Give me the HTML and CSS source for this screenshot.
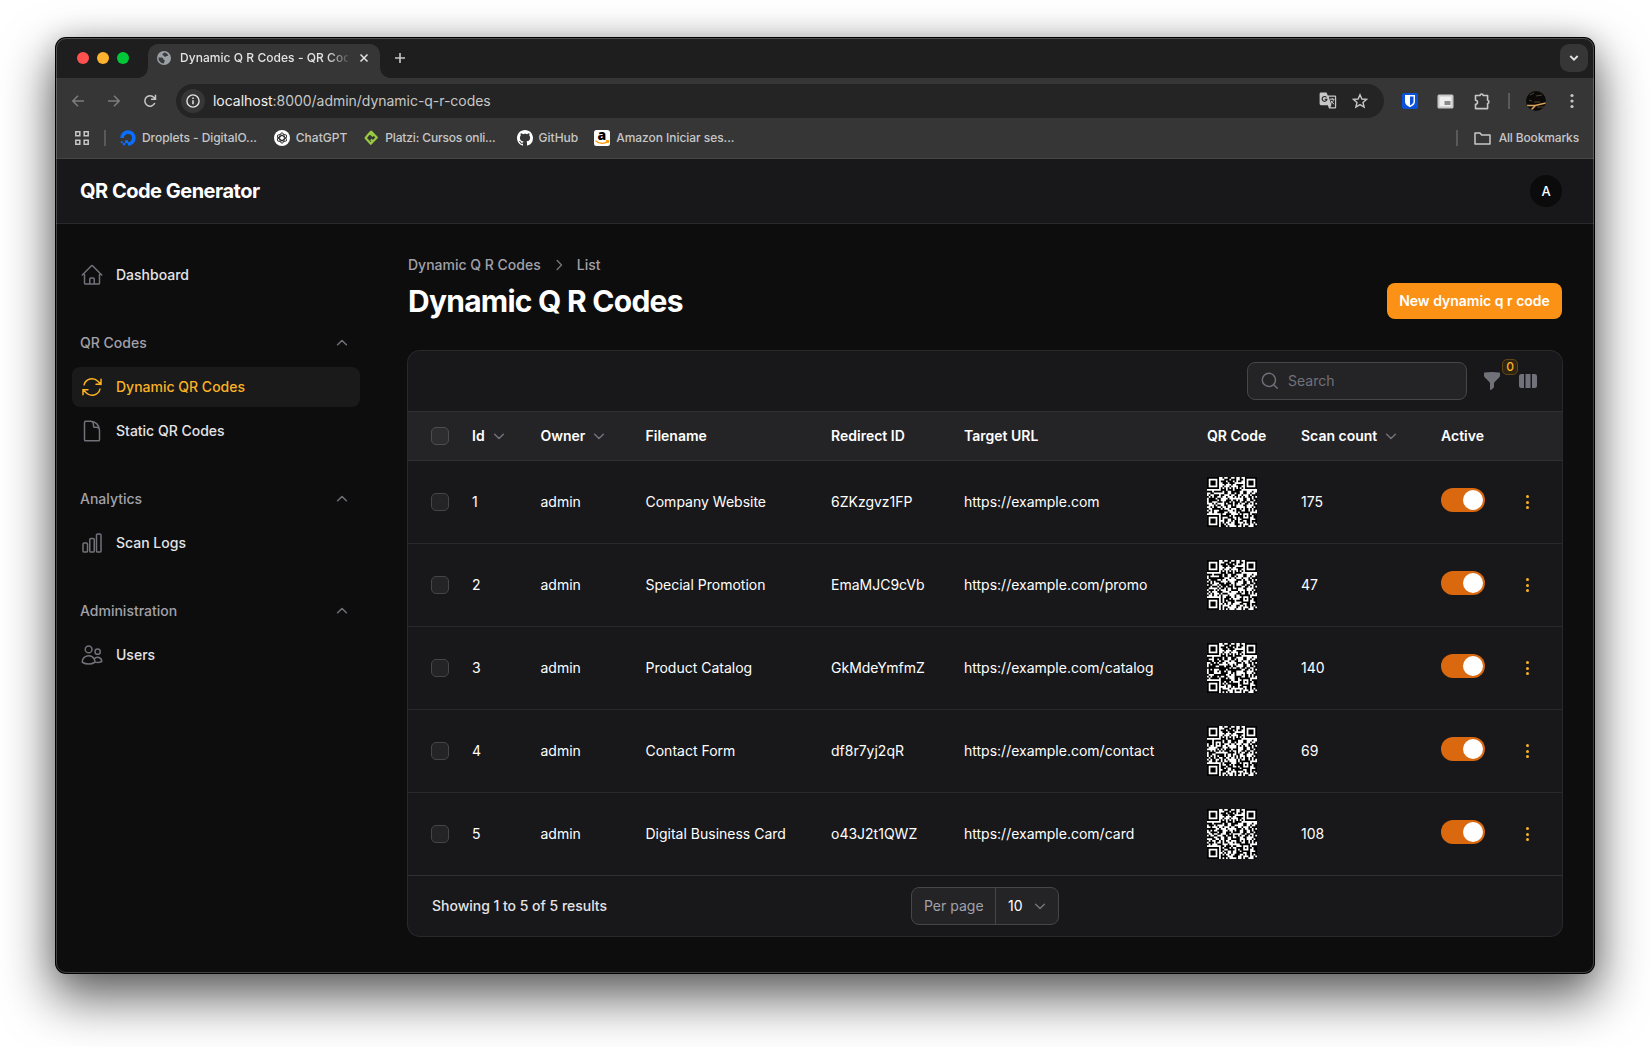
FILE: index.html
```html
<!DOCTYPE html>
<html lang="en">
<head>
<meta charset="utf-8">
<title>Dynamic Q R Codes - QR Code Generator</title>
<link rel="stylesheet" href="styles.css">
</head>
<body>
<svg width="0" height="0" class="defs">
  <symbol id="chev" viewBox="0 0 20 20"><path d="M5.600 8.200 10 12.500 14.400 8.200" fill="none" stroke="currentColor" stroke-width="1.500" stroke-linecap="round" stroke-linejoin="round"/></symbol>
</svg>
<div class="window">
  <div class="tabstrip">
    <div class="lights"><i class="red"></i><i class="amber"></i><i class="green"></i></div>
    <div class="tab">
      <svg width="14" height="14" viewBox="0 0 14 14"><circle cx="7" cy="7" r="7" fill="#9aa0a6"/><path d="M7.500 1.500c1 .3 2.600 1 3.800 2.700-.6.8-1.700.5-2.300 1.200-.5.700-1.800.5-2.100-.3-.3-.9-1.200-.4-1.400-1.300C5.300 2.600 6.400 2 7.500 1.500zM1.500 6.500c1.500.1 3.400-.2 4.300.6.600.6.100 1.300 1.100 1.600 1 .2 1.100 1 .6 1.700-.5.600-.2 1.700-1.100 2.200C3.500 12.200 1.300 9.500 1.500 6.500z" fill="#3a3b3d"/></svg>
      <span class="tab-title">Dynamic Q R Codes - QR Cod</span>
      <svg class="close" width="10" height="10" viewBox="0 0 10 10"><path d="M1.500 1.500l7 7M8.500 1.500l-7 7" stroke="#e3e3e3" stroke-width="1.500"/></svg>
    </div>
    <svg class="plus" width="12" height="12" viewBox="0 0 12 12"><path d="M6 1v10M1 6h10" stroke="#c7c7c7" stroke-width="1.600"/></svg>
    <div class="tab-menu"><svg width="10" height="8" viewBox="0 0 10 8"><path d="M1.300 2l3.700 3.700L8.700 2" fill="none" stroke="#e3e3e3" stroke-width="1.800"/></svg></div>
  </div>
  <div class="toolbar">
    <svg width="12" height="12" viewBox="0 0 12 12"><path d="M6 .7.9 6 6 11.300M1 6h11" fill="none" stroke="#7d7d7d" stroke-width="1.500"/></svg>
    <svg width="12" height="12" viewBox="0 0 12 12"><path d="M6 .7 11.100 6 6 11.300M11 6H0" fill="none" stroke="#7d7d7d" stroke-width="1.500"/></svg>
    <svg width="14" height="14" viewBox="0 0 14 14"><path d="M11.800 9A5.200 5.200 0 1 1 11 3.600l1 1.200M12.500.8v4.500H8" fill="none" stroke="#c7c7c7" stroke-width="1.500"/></svg>
    <div class="address">
      <span class="info"><svg width="14" height="14" viewBox="0 0 14 14"><circle cx="7" cy="7" r="6.100" fill="none" stroke="#e3e3e3" stroke-width="1.400"/><path d="M7 6.200v4M7 3.500v1.500" stroke="#e3e3e3" stroke-width="1.500"/></svg></span>
      <span class="url"><b>localhost</b>:8000/admin/dynamic-q-r-codes</span>
      <svg class="translate" width="18" height="18" viewBox="0 0 18 18"><path d="M2 .6h5.500l1.300 3H16a1.200 1.200 0 0 1 1.200 1.200v10.500A1.200 1.200 0 0 1 16 16.500h-6L8.800 13.200H2A1.400 1.400 0 0 1 .6 11.800V2A1.400 1.400 0 0 1 2 .6z" fill="#c7c7c7"/><path d="M9.800 4.800H16v10.400h-4.600l1-2.300-1.100-3.300z" fill="#2a2a2a"/><path d="M11 7.200h4.600M13.200 6v1.200M14.700 7.300c-.4 2-1.600 3.500-3 4.500M12 8.800c.7 1.500 1.800 2.600 3.200 3.400" stroke="#c7c7c7" fill="none"/><path d="M7.500 5.500A2.400 2.400 0 1 0 7.900 7.400H5.700" stroke="#2a2a2a" stroke-width="1.200" fill="none"/></svg>
      <svg width="16" height="16" viewBox="0 0 16 16"><path d="M8 1.700l1.900 4.300 4.700.4-3.600 3.100 1.100 4.600L8 11.600l-4.100 2.500L5 9.500 1.400 6.400 6.100 6z" fill="none" stroke="#c7c7c7" stroke-width="1.400"/></svg>
    </div>
    <svg class="bitwarden" width="16" height="16" viewBox="0 0 16 16"><rect width="16" height="16" rx="2" fill="#0a52d8"/><path d="M3 2h10v6.500c0 3-3 4.800-5 5.700-2-.9-5-2.700-5-5.700z" fill="#fff"/><path d="M8 3.500h3.500v5c0 1.800-1.800 3.100-3.500 4z" fill="#0a52d8"/></svg>
    <svg class="pip" width="17" height="15" viewBox="0 0 17 15"><rect x=".5" y=".5" width="16" height="14" rx="1.500" fill="#c7c7c7"/><rect x="2.500" y="2.500" width="12" height="10" fill="#eee"/><rect x="7.500" y="7" width="6" height="4" fill="#8a8a8a"/></svg>
    <svg class="puzzle" width="17" height="17" viewBox="0 0 17 17"><path d="M1.500 2.500h4.600a1.500 1.500 0 0 1 3 0h4.500v4.800a1.700 1.700 0 0 1 0 3.300v5H1.500v-4.300a2 2 0 0 0 0-4z" fill="none" stroke="#c7c7c7" stroke-width="1.600" stroke-linejoin="round"/></svg>
    <i class="sep"></i>
    <svg class="photo" width="20" height="20" viewBox="0 0 20 20"><clipPath id="r"><circle cx="10" cy="10" r="10"/></clipPath><g clip-path="url(#r)"><path fill="#0b0a09" d="M0 0h20v20H0z"/><path d="M4 4l4-2M10 5l6-1M3 9l3 1" stroke="#4a4238"/><path d="M1 14.500h8.500l-4 4M9 14.500l11-2.500" stroke="#d9a35c" stroke-width="1.500" fill="none"/><path d="M11 16h9M8 11h6" stroke="#5c4326"/></g></svg>
    <svg class="dots" width="4" height="16" viewBox="0 0 4 16" fill="#c7c7c7"><circle cx="2" cy="2.500" r="1.600"/><circle cx="2" cy="8" r="1.600"/><circle cx="2" cy="13.500" r="1.600"/></svg>
  </div>
  <div class="bookmarks">
    <svg width="14" height="14" viewBox="0 0 14 14" fill="none" stroke="#c7c7c7" stroke-width="1.500"><path d="M.8.800h4v4h-4zM9.200.8h4v4h-4zM.8 9.200h4v4h-4zM9.200 9.200h4v4h-4z"/></svg>
    <i class="sep"></i>
    <span class="bm do"><svg width="16" height="16" viewBox="0 0 16 16"><path d="M8 13.900A5.900 5.900 0 1 0 2.100 8" fill="none" stroke="#0a6fff" stroke-width="3.600"/><path d="M5 10.300h3v3H5zM2.800 13h2.300v2.300H2.800zM.8 11.200h2V13h-2z" fill="#0a6fff"/></svg><span>Droplets - DigitalO...</span></span>
    <span class="bm gpt"><svg width="16" height="16" viewBox="0 0 16 16"><circle cx="8" cy="8" r="8" fill="#fff"/><g fill="none" stroke="#222" stroke-width=".9"><ellipse cx="8" cy="8" rx="2.300" ry="5.100"/><ellipse cx="8" cy="8" rx="2.300" ry="5.100" transform="rotate(60 8 8)"/><ellipse cx="8" cy="8" rx="2.300" ry="5.100" transform="rotate(120 8 8)"/></g></svg><span>ChatGPT</span></span>
    <span class="bm platzi"><svg width="16" height="16" viewBox="0 0 16 16"><path d="M10.300 6.300 6.700 2.900 2.600 8l5.200 5.800 2-2.300M6.500 3.100 8.300 1.700l5.500 5.700-3.900 4L7.800 9.500" fill="none" stroke="#98ca3f" stroke-width="2.200" stroke-linejoin="round"/></svg><span>Platzi: Cursos onli...</span></span>
    <span class="bm gh"><svg width="16" height="16" viewBox="0 0 16 16"><path fill="#fff" d="M8 0C3.580 0 0 3.580 0 8c0 3.540 2.290 6.530 5.470 7.590.4.070.55-.17.55-.38 0-.19-.01-.82-.01-1.490-2.010.37-2.530-.49-2.690-.94-.09-.23-.48-.94-.82-1.130-.28-.15-.68-.52-.01-.53.63-.01 1.080.58 1.230.82.72 1.210 1.870.87 2.330.66.070-.52.28-.87.51-1.070-1.780-.2-3.640-.89-3.640-3.950 0-.87.31-1.590.82-2.150-.08-.2-.36-1.020.08-2.120 0 0 .67-.21 2.200.82.64-.18 1.320-.27 2-.27s1.360.09 2 .27c1.530-1.040 2.200-.82 2.200-.82.44 1.100.16 1.920.08 2.120.51.56.82 1.270.82 2.150 0 3.070-1.870 3.750-3.650 3.950.29.25.54.73.54 1.480 0 1.070-.01 1.930-.01 2.200 0 .21.15.46.55.38A8.010 8.010 0 0 0 16 8c0-4.420-3.580-8-8-8z"/></svg><span>GitHub</span></span>
    <span class="bm amz"><svg width="16" height="16" viewBox="0 0 16 16"><rect width="16" height="16" rx="2.500" fill="#fff"/><text x="7.800" y="9.500" text-anchor="middle" font-family="Open Sans" font-weight="800" font-size="14">a</text><path d="M1.500 10.800c4 3.200 9 3.200 12.500.6M12 10.700l2.500.1-.6 2.200" fill="none" stroke="#f90" stroke-width="1.400"/></svg><span>Amazon Iniciar ses...</span></span>
    <i class="sep end"></i>
    <span class="bm all"><svg width="17" height="13" viewBox="0 0 17 13"><path d="M1 1h5l1.700 2H16v9H1z" fill="none" stroke="#c7c7c7" stroke-width="1.500" stroke-linejoin="round"/></svg><span>All Bookmarks</span></span>
  </div>
  <header class="topbar"><span class="brand">QR Code Generator</span><span class="avatar">A</span></header>
  <div class="page">
    <nav class="sidebar">
      <ul><li class="item"><svg class="ic" viewBox="0 0 24 24"><path d="m2.250 12 8.954-8.955c.44-.439 1.152-.439 1.591 0L21.750 12M4.500 9.750v10.125c0 .621.504 1.125 1.125 1.125H9.750v-4.875c0-.621.504-1.125 1.125-1.125h2.250c.621 0 1.125.504 1.125 1.125V21h4.125c.621 0 1.125-.504 1.125-1.125V9.750M8.250 21h8.250"/></svg>Dashboard</li></ul>
      <ul>
        <li class="group">QR Codes<svg><use href="#chev"/></svg></li>
        <li class="item active"><svg class="ic" viewBox="0 0 24 24"><path d="M16.023 9.348h4.992v-.001M2.985 19.644v-4.992m0 0h4.992m-4.993 0 3.181 3.183a8.250 8.250 0 0 0 13.803-3.700M4.031 9.865a8.250 8.250 0 0 1 13.803-3.700l3.181 3.182m0-4.991v4.990"/></svg>Dynamic QR Codes</li>
        <li class="item"><svg class="ic" viewBox="0 0 24 24"><path d="M19.500 14.250v-2.625a3.375 3.375 0 0 0-3.375-3.375h-1.500A1.125 1.125 0 0 1 13.500 7.125v-1.500a3.375 3.375 0 0 0-3.375-3.375H5.625c-.621 0-1.125.504-1.125 1.125v17.250c0 .621.504 1.125 1.125 1.125h12.750c.621 0 1.125-.504 1.125-1.125V11.250a9 9 0 0 0-9-9"/></svg>Static QR Codes</li>
      </ul>
      <ul>
        <li class="group">Analytics<svg><use href="#chev"/></svg></li>
        <li class="item"><svg class="ic" viewBox="0 0 24 24"><path d="M3 13.125C3 12.504 3.504 12 4.125 12h2.250c.621 0 1.125.504 1.125 1.125v6.750C7.500 20.496 6.996 21 6.375 21h-2.250A1.125 1.125 0 0 1 3 19.875v-6.750ZM9.750 8.625c0-.621.504-1.125 1.125-1.125h2.250c.621 0 1.125.504 1.125 1.125v11.250c0 .621-.504 1.125-1.125 1.125h-2.250a1.125 1.125 0 0 1-1.125-1.125V8.625ZM16.500 4.125c0-.621.504-1.125 1.125-1.125h2.250C20.496 3 21 3.504 21 4.125v15.750c0 .621-.504 1.125-1.125 1.125h-2.250a1.125 1.125 0 0 1-1.125-1.125V4.125Z"/></svg>Scan Logs</li>
      </ul>
      <ul>
        <li class="group">Administration<svg><use href="#chev"/></svg></li>
        <li class="item"><svg class="ic" viewBox="0 0 24 24"><path d="M15 19.128a9.380 9.380 0 0 0 2.625.372 9.337 9.337 0 0 0 4.121-.952 4.125 4.125 0 0 0-7.533-2.493M15 19.128v-.003c0-1.113-.285-2.160-.786-3.070M15 19.128v.106A12.318 12.318 0 0 1 8.624 21c-2.331 0-4.512-.645-6.374-1.766l-.001-.109a6.375 6.375 0 0 1 11.964-3.070M12 6.375a3.375 3.375 0 1 1-6.750 0 3.375 3.375 0 0 1 6.750 0Zm8.250 2.250a2.625 2.625 0 1 1-5.250 0 2.625 2.625 0 0 1 5.250 0Z"/></svg>Users</li>
      </ul>
    </nav>
    <main class="main">
      <div class="head">
        <div>
          <div class="crumbs"><span>Dynamic Q R Codes</span><svg><use href="#chev"/></svg><span>List</span></div>
          <h1>Dynamic Q R Codes</h1>
        </div>
        <button class="new">New dynamic q r code</button>
      </div>
      <section class="card">
        <div class="filters">
          <div class="search"><svg width="20" height="20" viewBox="0 0 20 20"><circle cx="8.900" cy="8.900" r="6.600" fill="none" stroke="#71717a" stroke-width="1.400"/><path d="m13.700 13.700 3.600 3.600" stroke="#71717a" stroke-width="1.400" stroke-linecap="round"/></svg>Search</div>
          <span class="funnel"><svg width="20" height="20" viewBox="0 0 20 20"><path fill="#71717a" fill-rule="evenodd" d="M2.628 1.601C5.028 1.206 7.490 1 10 1s4.973.206 7.372.601a.75.75 0 0 1 .628.740v2.288a2.250 2.250 0 0 1-.659 1.590l-4.682 4.683a2.250 2.250 0 0 0-.659 1.590v3.037c0 .684-.31 1.330-.844 1.757l-1.937 1.550A.75.75 0 0 1 8 18.250v-5.757a2.250 2.250 0 0 0-.659-1.591L2.659 6.220A2.250 2.250 0 0 1 2 4.629V2.340a.75.75 0 0 1 .628-.740Z"/></svg><span class="badge">0</span></span>
          <svg width="20" height="20" viewBox="0 0 20 20" fill="#71717a"><path d="M14 17h2.750A2.250 2.250 0 0 0 19 14.750v-9.500A2.250 2.250 0 0 0 16.750 3H14v14ZM12.500 3h-5v14h5V3ZM3.250 3H6v14H3.250A2.250 2.250 0 0 1 1 14.750v-9.500A2.250 2.250 0 0 1 3.250 3Z"/></svg>
        </div>
        <div class="row thead"><i class="check"></i><span>Id<svg><use href="#chev"/></svg></span><span>Owner<svg><use href="#chev"/></svg></span><span>Filename</span><span>Redirect ID</span><span>Target URL</span><span>QR Code</span><span>Scan count<svg><use href="#chev"/></svg></span><span>Active</span><span></span></div>
        <div class="row"><i class="check"></i><span>1</span><span>admin</span><span>Company Website</span><span>6ZKzgvz1FP</span><span>https://example.com</span><svg class="qr" data-code="6ZKzgvz1FP"></svg><span>175</span><i class="toggle"></i><span class="more"><i></i><i></i><i></i></span></div>
        <div class="row"><i class="check"></i><span>2</span><span>admin</span><span>Special Promotion</span><span>EmaMJC9cVb</span><span>https://example.com/promo</span><svg class="qr" data-code="EmaMJC9cVb"></svg><span>47</span><i class="toggle"></i><span class="more"><i></i><i></i><i></i></span></div>
        <div class="row"><i class="check"></i><span>3</span><span>admin</span><span>Product Catalog</span><span>GkMdeYmfmZ</span><span>https://example.com/catalog</span><svg class="qr" data-code="GkMdeYmfmZ"></svg><span>140</span><i class="toggle"></i><span class="more"><i></i><i></i><i></i></span></div>
        <div class="row"><i class="check"></i><span>4</span><span>admin</span><span>Contact Form</span><span>df8r7yj2qR</span><span>https://example.com/contact</span><svg class="qr" data-code="df8r7yj2qR"></svg><span>69</span><i class="toggle"></i><span class="more"><i></i><i></i><i></i></span></div>
        <div class="row"><i class="check"></i><span>5</span><span>admin</span><span>Digital Business Card</span><span>o43J2t1QWZ</span><span>https://example.com/card</span><svg class="qr" data-code="o43J2t1QWZ"></svg><span>108</span><i class="toggle"></i><span class="more"><i></i><i></i><i></i></span></div>
        <div class="foot"><span class="showing">Showing 1 to 5 of 5 results</span><div class="perpage"><span>Per page</span><b>10<svg><use href="#chev"/></svg></b></div></div>
      </section>
    </main>
  </div>
</div>
<script src="qr.js"></script>
</body>
</html>
```
FILE: styles.css
```css
*{box-sizing:border-box}
body{margin:0;height:1047px;overflow:hidden;background:#fff;padding:38px 56px;font:400 14px/20px Inter,sans-serif;color:#fff}
ul{list-style:none;margin:0;padding:0}
svg{flex:none;display:block}
.defs{position:absolute}
.window{position:relative;width:1538px;height:935px;border-radius:10px;background:#0d0d0d;box-shadow:0 0 0 1px #000,0 22px 50px 4px rgba(0,0,0,.6),0 0 26px rgba(0,0,0,.16)}
.window::after{content:"";position:absolute;inset:0;border-radius:10px;border:1px solid rgba(255,255,255,.22);pointer-events:none}
/* browser chrome */
.tabstrip{height:40px;background:#1e1e1e;border-radius:10px 10px 0 0;display:flex;align-items:center;padding-left:21px}
.lights{display:flex;gap:8px;width:71px}
.lights i{width:12px;height:12px;border-radius:50%}
.red{background:#ff5250}.amber{background:#ffb22e}.green{background:#00c839}
.tab{position:relative;align-self:flex-end;height:34px;width:232px;background:#363636;border-radius:10px 10px 0 0;display:flex;align-items:center;padding:0 10px 6px 9px}
.tab::before,.tab::after{content:"";position:absolute;bottom:0;width:10px;height:10px}
.tab::before{left:-10px;background:radial-gradient(circle at 0 0,transparent 9.500px,#363636 10px)}
.tab::after{right:-10px;background:radial-gradient(circle at 100% 0,transparent 9.500px,#363636 10px)}
.tab-title{margin-left:9px;width:168px;white-space:nowrap;font-size:12px;font-weight:500;letter-spacing:.05px;color:#e3e3e3;-webkit-mask-image:linear-gradient(90deg,#000 88%,rgba(0,0,0,.15))}
.close{margin-left:11px}
.plus{margin-left:14px}
.tab-menu{margin-left:auto;margin-right:6px;width:28px;height:28px;border-radius:9px;background:#363636;display:grid;place-items:center}
.toolbar{height:46px;background:#363636;display:flex;align-items:center;padding:0 20px 0 16px}
.toolbar>svg:nth-child(2){margin-left:24px}
.toolbar>svg:nth-child(3){margin-left:23px}
.address{margin-left:19px;width:1208px;height:34px;border-radius:17px;background:#242424;display:flex;align-items:center;padding:0 16px 0 5px}
.info{width:24px;height:24px;border-radius:50%;background:#363636;display:grid;place-items:center}
.url{margin-left:8px;font-size:14px;letter-spacing:-.03px;color:#c7c7c7}
.url b{font-weight:400;color:#f0f0f0}
.translate{margin-left:auto;margin-right:15px}
.bitwarden{margin-left:18px}.pip{margin-left:19px}.puzzle{margin-left:20px}
.sep{width:2px;height:16px;background:#5a5a5a}
.toolbar .sep{margin-left:17px}
.photo{margin-left:16px}.dots{margin-left:auto}
.bookmarks{height:35px;background:#363636;border-bottom:1px solid #454545;display:flex;align-items:center;padding:0 15px 6px 19px;font-size:12px;font-weight:500;color:#c7c7c7}
.bookmarks>.sep{margin-left:15px}
.bookmarks>.end{margin-left:auto}
.bm{display:flex;align-items:center;gap:6px;margin-left:16px;white-space:nowrap}
.do{margin-left:14px;letter-spacing:-.05px}
.gpt{margin-left:17px}
.platzi{letter-spacing:-.15px}
.gh{margin-left:21px}
.amz{letter-spacing:-.05px}
.all{gap:8px;letter-spacing:-.15px}
/* application */
.topbar{height:65px;background:#18181b;border-bottom:1px solid #29292c;display:flex;align-items:center;justify-content:space-between;padding:0 32px 0 24px}
.brand{font-size:20px;font-weight:700;letter-spacing:-.5px}
.avatar{width:32px;height:32px;border-radius:50%;background:#0b0b0c;display:grid;place-items:center;font-size:13px;font-weight:500}
.page{display:flex}
.sidebar{width:320px;padding:31px 16px;display:flex;flex-direction:column;gap:28px}
.sidebar ul{display:flex;flex-direction:column;gap:4px}
.sidebar li{height:40px;padding:8px;display:flex;align-items:center;gap:12px;font-weight:500;border-radius:8px;color:#e4e4e7}
.ic{width:24px;height:24px;fill:none;stroke:#71717a;stroke-width:1.500;stroke-linecap:round;stroke-linejoin:round}
.sidebar .group{color:#a1a1aa;justify-content:space-between}
.group svg{width:20px;height:20px;color:#71717a;transform:rotate(180deg)}
.sidebar .active{background:#1a1a1a;color:#fbb224}
.active .ic{stroke:#fbb224}
.main{flex:1;padding:31px 32px 0}
.head{display:flex;justify-content:space-between;align-items:center;margin-bottom:32px}
.crumbs{display:flex;align-items:center;gap:8px;font-weight:500;color:#a1a1aa}
.crumbs svg{width:20px;height:20px;transform:rotate(-90deg);color:#71717a}
h1{margin:8px 0 0;font-size:30px;line-height:36px;font-weight:700;letter-spacing:-.75px}
.new{margin-top:28px;height:36px;width:175px;border:0;border-radius:8px;background:#fb9216;color:#fff;font:600 14px/20px Inter,sans-serif;padding:0}
.card{width:1154px;border-radius:12px;background:#18181b;box-shadow:0 0 0 1px #29292c}
.filters{height:60px;display:flex;align-items:center;justify-content:flex-end;padding-right:24px}
.search{width:220px;height:38px;border:1px solid #464649;border-radius:8px;background:#242427;display:flex;align-items:center;gap:8px;padding-left:12px;color:#71717a;font-size:14px}
.funnel{position:relative;margin:0 16px 0 15px}
.badge{position:absolute;left:20px;top:-12px;width:16px;height:16px;border:1px solid #604716;border-radius:5px;background:#2e2413;color:#fbb224;font:500 12px/14px Inter,sans-serif;text-align:center}
.row{height:83px;border-top:1px solid #29292c;display:grid;grid-template-columns:41px 68.500px 105px 185.500px 133px 243px 94px 140px 79.500px 1fr;padding-left:23px;align-items:center}
.thead{height:49px;background:#242427;border-color:#303033;font-weight:600}
.thead+.row{border-color:#303033}
.row>span{display:flex;align-items:center;gap:4px;white-space:nowrap}
.row svg:not(.qr),.perpage svg{width:20px;height:20px;color:#71717a}
.check{width:18px;height:18px;border:1px solid #464649;border-radius:5px;background:#242427}
.thead .check{background:#2e2e31;border-color:#4d4d50}
.qr{width:50px;height:50px}
.toggle{width:44px;height:24px;border-radius:12px;background:#d9680f;padding:2px;margin-top:-4px}
.toggle::after{content:"";display:block;width:20px;height:20px;border-radius:50%;background:#fff;margin-left:20px}
.row>.more{flex-direction:column;gap:2.600px;width:14px}
.more i{width:3px;height:3px;border-radius:50%;background:#fbb224}
.foot{height:61px;border-top:1px solid #303033;display:grid;grid-template-columns:1fr auto 1fr;align-items:center;padding:0 24px}
.showing{font-weight:500;color:#e4e4e7;letter-spacing:-.02px}
.perpage{width:148px;height:38px;border:1px solid #464649;border-radius:8px;background:#242427;display:flex;align-items:stretch;line-height:36px}
.perpage span{width:84px;padding-left:12px;border-right:1px solid #464649;color:#a1a1aa}
.perpage b{font-weight:400;padding-left:12px;display:flex;align-items:center;gap:7px}
```
FILE: qr.js
```js
// QR encoder for version 3, error correction level L, mask 0 (29 x 29 modules).
const SIZE = 29, DATA = 55, ECC = 15, MASK = 0;

function gmul(a, b) {
  let r = 0;
  for (; b; b >>= 1) { if (b & 1) r ^= a; a <<= 1; if (a & 256) a ^= 0x11d; }
  return r;
}

function codewords(text) {
  let bits = '0100' + text.length.toString(2).padStart(8, '0');
  for (const c of text) bits += c.charCodeAt(0).toString(2).padStart(8, '0');
  bits += '0000';
  const out = [];
  for (let i = 0; i < bits.length; i += 8) out.push(parseInt(bits.slice(i, i + 8), 2));
  for (let p = 0; out.length < DATA; p ^= 1) out.push(p ? 0x11 : 0xec);
  let gen = [1], root = 1;
  for (let i = 0; i < ECC; i++) {
    const next = [...gen, 0];
    gen.forEach((g, j) => { next[j + 1] ^= gmul(g, root); });
    gen = next;
    root = gmul(root, 2);
  }
  const rem = [...out, ...Array(ECC).fill(0)];
  for (let i = 0; i < DATA; i++) {
    const f = rem[i];
    gen.forEach((g, j) => { rem[i + j] ^= gmul(g, f); });
  }
  return out.concat(rem.slice(DATA));
}

function build(words) {
  const m = Array.from({ length: SIZE }, () => Array(SIZE).fill(null));
  const finder = (y, x) => {
    for (let r = -1; r < 8; r++) for (let c = -1; c < 8; c++) {
      if (m[y + r] === undefined || m[y + r][x + c] === undefined) continue;
      const d = Math.max(Math.abs(r - 3), Math.abs(c - 3));
      m[y + r][x + c] = d === 3 || d < 2 ? 1 : 0;
    }
  };
  finder(0, 0); finder(0, SIZE - 7); finder(SIZE - 7, 0);
  for (let i = 8; i < SIZE - 8; i++) m[6][i] = m[i][6] = i % 2 ? 0 : 1;
  for (let r = -2; r < 3; r++) for (let c = -2; c < 3; c++)
    m[22 + r][22 + c] = Math.max(Math.abs(r), Math.abs(c)) === 1 ? 0 : 1;
  const v = 8 | MASK;
  let rem = v << 10;
  for (let i = 14; i >= 10; i--) if (rem >> i & 1) rem ^= 0x537 << (i - 10);
  const fmt = ((v << 10) | rem) ^ 0x5412;
  for (let i = 0; i < 15; i++) {
    const b = fmt >> i & 1;
    m[i < 6 ? i : i < 8 ? i + 1 : SIZE - 15 + i][8] = b;
    m[8][i < 8 ? SIZE - 1 - i : i < 9 ? 7 : 14 - i] = b;
  }
  m[SIZE - 8][8] = 1;
  let k = 0, up = true;
  for (let x = SIZE - 1; x > 0; x -= 2) {
    if (x === 6) x--;
    for (let i = 0; i < SIZE; i++) {
      const y = up ? SIZE - 1 - i : i;
      for (const c of [x, x - 1]) {
        if (m[y][c] !== null) continue;
        const bit = k < words.length * 8 ? words[k >> 3] >> (7 - (k & 7)) & 1 : 0;
        m[y][c] = bit ^ ((y + c) % 2 === 0 ? 1 : 0);
        k++;
      }
    }
    up = !up;
  }
  return m;
}

document.querySelectorAll('.qr').forEach(svg => {
  const modules = build(codewords('http://localhost:8000/r/' + svg.dataset.code));
  let d = '';
  modules.forEach((row, y) => row.forEach((on, x) => { if (on) d += `M${x} ${y}h1v1h-1z`; }));
  svg.setAttribute('viewBox', `0 0 ${SIZE} ${SIZE}`);
  svg.innerHTML = `<path fill="#fff" d="M0 0h29v29H0z"/><path fill="#000" d="${d}"/>`;
});
```
